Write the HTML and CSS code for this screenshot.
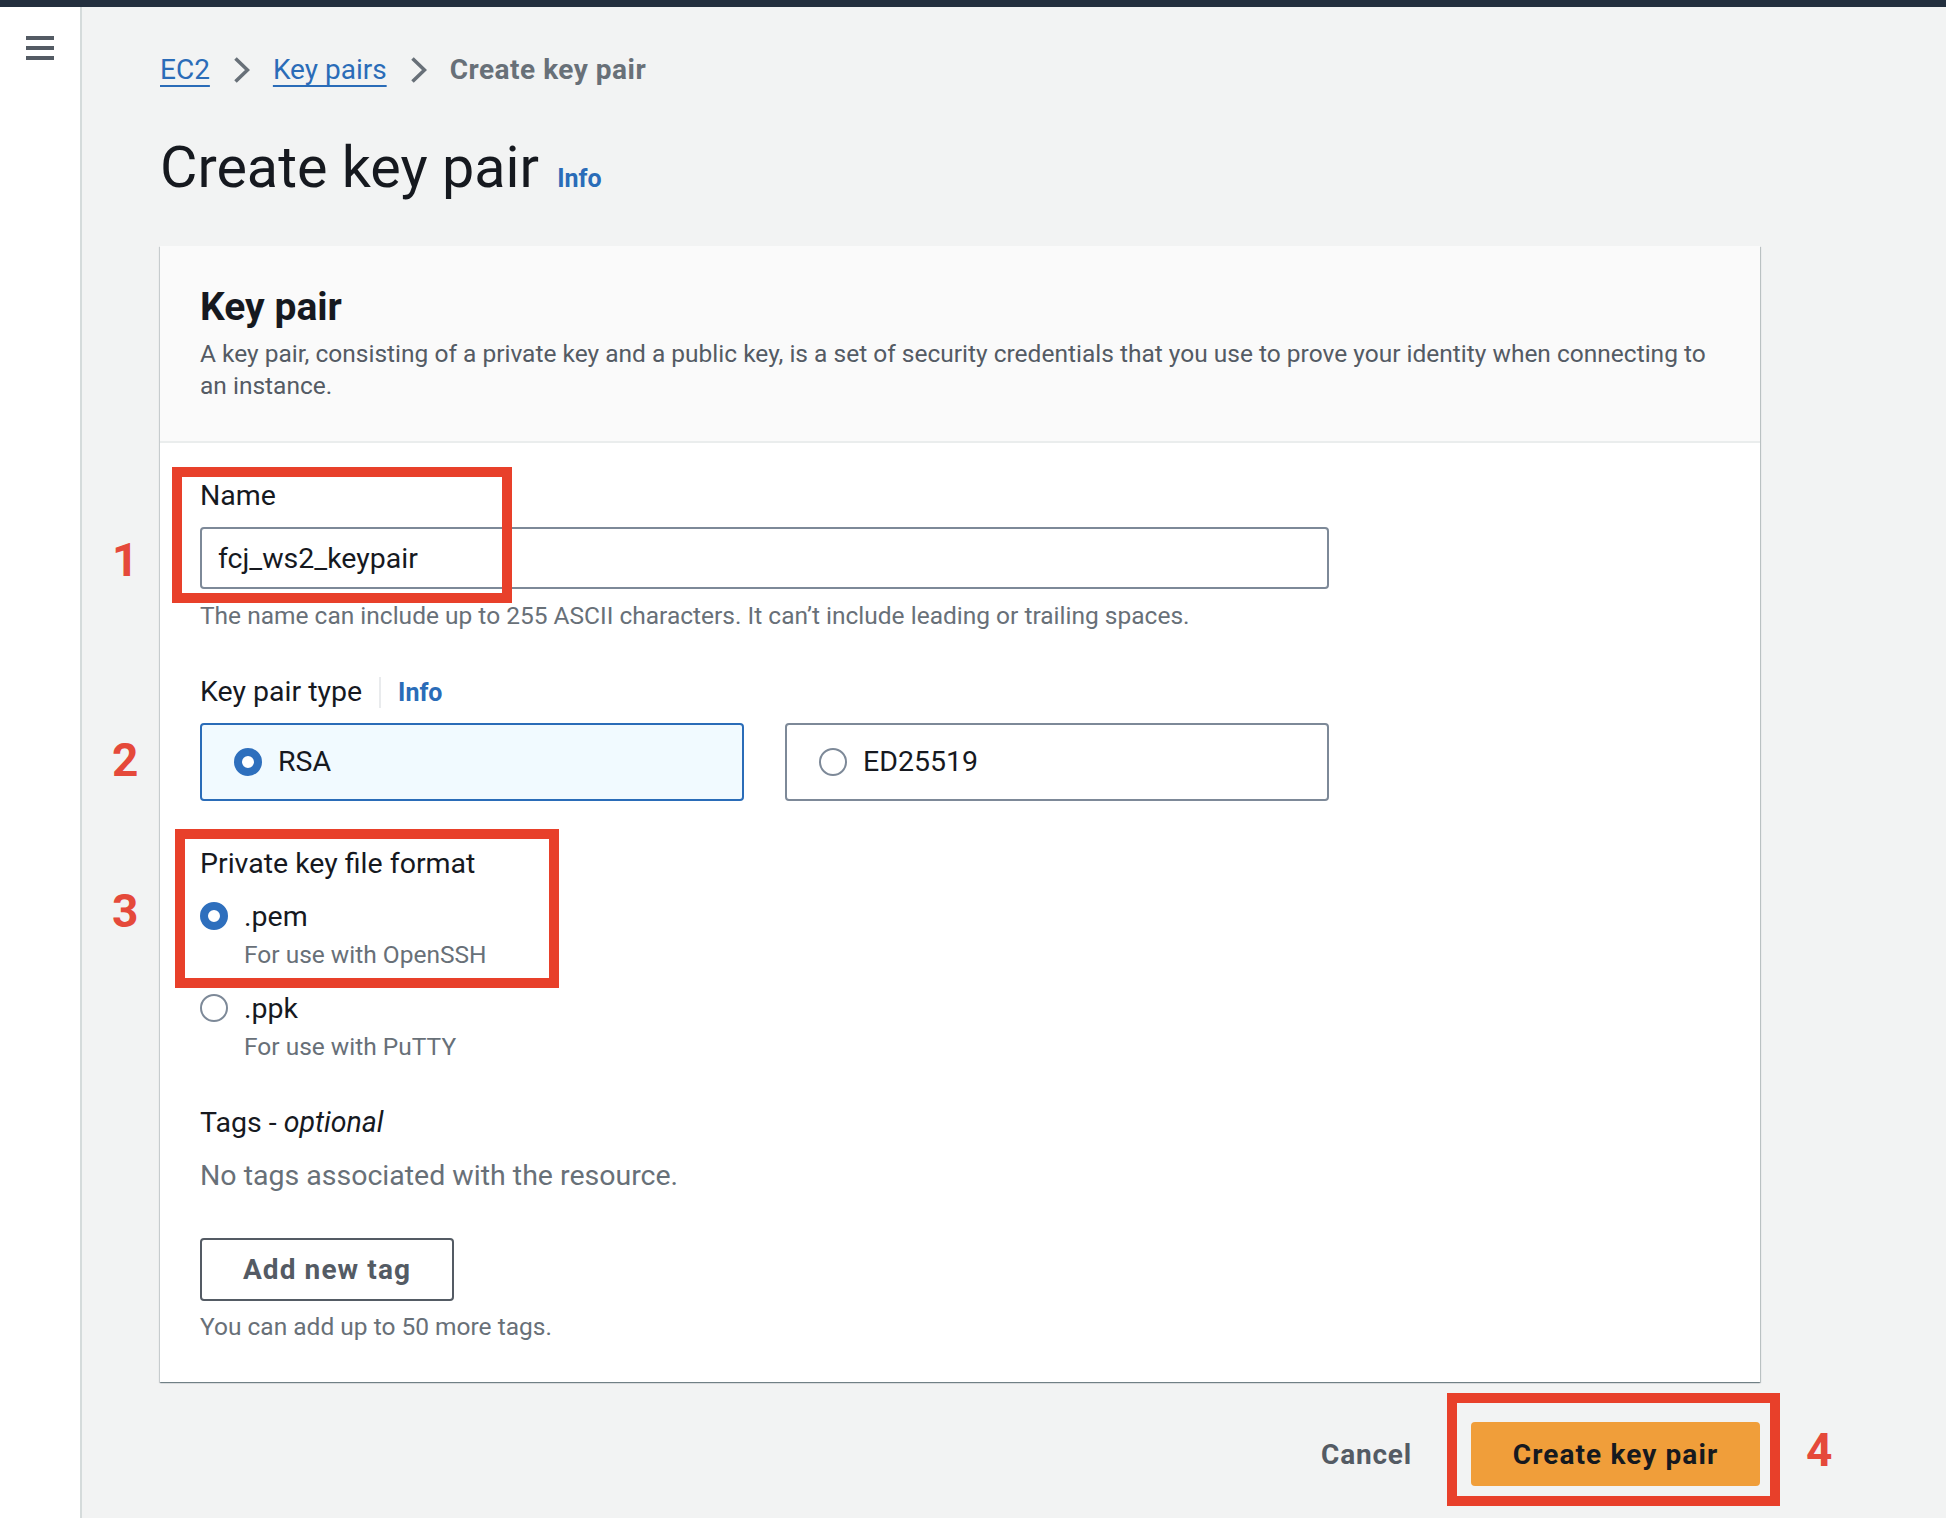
FILE: index.html
```html
<!DOCTYPE html>
<html lang="en">
<head>
<meta charset="utf-8">
<title>Create key pair</title>
<link rel="stylesheet" href="styles.css">
</head>
<body>
<div class="topbar"></div>
<div class="layout">
  <aside class="sidebar">
    <button class="hamburger" aria-label="Open navigation"><span></span><span></span><span></span></button>
  </aside>
  <main class="main">
    <nav class="breadcrumb">
      <a class="crumb-link" href="#">EC2</a>
      <svg class="chevron" width="17" height="28" viewBox="0 0 17 28"><polyline points="2.5,2.5 14.5,14 2.5,25.5" fill="none" stroke="#687078" stroke-width="3.6"/></svg>
      <a class="crumb-link" href="#">Key pairs</a>
      <svg class="chevron" width="17" height="28" viewBox="0 0 17 28"><polyline points="2.5,2.5 14.5,14 2.5,25.5" fill="none" stroke="#687078" stroke-width="3.6"/></svg>
      <span class="crumb-current">Create key pair</span>
    </nav>

    <h1 class="page-title">Create key pair <a class="info-link title-info" href="#">Info</a></h1>

    <section class="card">
      <header class="card-header">
        <h2 class="card-title">Key pair</h2>
        <p class="card-desc">A key pair, consisting of a private key and a public key, is a set of security credentials that you use to prove your identity when connecting to an instance.</p>
      </header>
      <div class="card-body">
        <div class="field field-name">
          <label class="field-label">Name</label>
          <div class="text-input">fcj_ws2_keypair</div>
          <p class="help">The name can include up to 255 ASCII characters. It can’t include leading or trailing spaces.</p>
          <div class="mark mark-1"></div>
          <span class="step step-1">1</span>
        </div>

        <div class="field field-type">
          <div class="label-row">
            <span class="field-label">Key pair type</span>
            <span class="divider"></span>
            <a class="info-link" href="#">Info</a>
          </div>
          <div class="tiles">
            <div class="tile tile-selected"><span class="radio radio-on"></span><span class="tile-text">RSA</span></div>
            <div class="tile"><span class="radio"></span><span class="tile-text">ED25519</span></div>
          </div>
          <span class="step step-2">2</span>
        </div>

        <div class="field field-format">
          <div class="field-label">Private key file format</div>
          <div class="option option-first">
            <span class="radio radio-on"></span>
            <div class="option-text">
              <div class="option-label">.pem</div>
              <div class="option-desc">For use with OpenSSH</div>
            </div>
          </div>
          <div class="option option-second">
            <span class="radio"></span>
            <div class="option-text">
              <div class="option-label">.ppk</div>
              <div class="option-desc">For use with PuTTY</div>
            </div>
          </div>
          <div class="mark mark-3"></div>
          <span class="step step-3">3</span>
        </div>

        <div class="field field-tags">
          <div class="field-label">Tags - <em>optional</em></div>
          <p class="empty-tags">No tags associated with the resource.</p>
          <button class="btn-normal">Add new tag</button>
          <p class="help help-tags">You can add up to 50 more tags.</p>
        </div>
      </div>
    </section>

    <div class="actions">
      <button class="btn-link">Cancel</button>
      <div class="primary-wrap">
        <button class="btn-primary">Create key pair</button>
        <div class="mark mark-4"></div>
        <span class="step step-4">4</span>
      </div>
    </div>
  </main>
</div>
</body>
</html>
```

FILE: styles.css
```css
* { box-sizing: border-box; }

html, body {
  margin: 0;
  padding: 0;
}

body {
  background: #f2f3f3;
  font-family: "Roboto", "Liberation Sans", sans-serif;
  color: #16191f;
  min-height: 1518px;
}

.topbar {
  height: 7px;
  background: #232f3e;
}

.layout {
  display: flex;
  min-height: 1511px;
}

.sidebar {
  width: 82px;
  flex: 0 0 82px;
  background: #ffffff;
  border-right: 2px solid #d5dbdb;
  padding: 29px 0 0 26px;
}

.hamburger {
  display: flex;
  flex-direction: column;
  gap: 6px;
  width: 28px;
  padding: 0;
  border: 0;
  background: transparent;
}

.hamburger span {
  display: block;
  height: 4px;
  width: 28px;
  background: #545b64;
}

.main {
  flex: 1;
  padding: 45px 186px 0 78px;
}

/* Breadcrumb */
.breadcrumb {
  display: flex;
  align-items: center;
  height: 36px;
  font-size: 28px;
  line-height: 36px;
}

.crumb-link {
  color: #2a6cb8;
  text-decoration: underline;
  text-decoration-thickness: 2px;
  text-underline-offset: 6px;
}

.chevron {
  margin: 0 23px 0 23px;
  flex: 0 0 auto;
}

.crumb-current {
  color: #687078;
  font-weight: 700;
  letter-spacing: 0.5px;
}

/* Title */
.page-title {
  margin: 44px 0 0 0;
  font-size: 57.5px;
  line-height: 72px;
  font-weight: 400;
}

.info-link {
  color: #2a6cb8;
  font-weight: 700;
  font-size: 25px;
  text-decoration: none;
}

.title-info {
  margin-left: 4px;
  line-height: 1;
}

/* Card */
.card {
  margin-top: 42px;
  background: #ffffff;
  box-shadow: 0 1px 1px 0 rgba(0, 28, 36, 0.35), 1px 1px 1px 0 rgba(0, 28, 36, 0.18), -1px 1px 1px 0 rgba(0, 28, 36, 0.12);
}

.card-header {
  background: #fafafa;
  border-bottom: 2px solid #eaeded;
  padding: 37px 40px 39px 40px;
}

.card-title {
  margin: 0;
  font-size: 39px;
  line-height: 48px;
  font-weight: 700;
}

.card-desc {
  margin: 7px 0 0 0;
  font-size: 24.5px;
  line-height: 32px;
  color: #545b64;
}

.card-body {
  padding: 35px 40px 39px 40px;
}

.field {
  position: relative;
}

.field-label {
  display: block;
  font-size: 28.5px;
  line-height: 36px;
  color: #16191f;
}

.field-label em {
  font-style: italic;
}

.text-input {
  margin-top: 13px;
  max-width: 1129px;
  height: 62px;
  border: 2px solid #7d8998;
  border-radius: 4px;
  background: #ffffff;
  padding: 0 16px;
  display: flex;
  align-items: center;
  font-size: 28.5px;
  color: #16191f;
}

.help {
  margin: 11px 0 0 0;
  font-size: 24.5px;
  line-height: 32px;
  color: #687078;
}

.field-type {
  margin-top: 42px;
}

.label-row {
  display: flex;
  align-items: center;
  height: 36px;
}

.divider {
  width: 2px;
  height: 31px;
  background: #e9ebed;
  margin: 0 17px 0 17px;
}

.tiles {
  margin-top: 13px;
  max-width: 1129px;
  display: grid;
  grid-template-columns: 1fr 1fr;
  gap: 41px;
}

.tile {
  height: 78px;
  border: 2px solid #7d8998;
  border-radius: 4px;
  background: #ffffff;
  display: flex;
  align-items: center;
  padding-left: 32px;
  gap: 16px;
}

.tile-selected {
  border-color: #2a6cb8;
  background: #f1faff;
}

.tile-text {
  font-size: 28.5px;
  line-height: 36px;
}

.radio {
  display: inline-block;
  width: 28px;
  height: 28px;
  border-radius: 50%;
  border: 2px solid #7d8998;
  background: #ffffff;
  flex: 0 0 28px;
  position: relative;
}

.radio-on {
  border: 8px solid #2e6fbd;
  background: #ffffff;
}

.field-format {
  margin-top: 45px;
}

.option {
  display: flex;
  align-items: flex-start;
  gap: 16px;
}

.option .radio {
  margin-top: 3px;
}

.option-first {
  margin-top: 17px;
}

.option-second {
  margin-top: 20px;
}

.option-label {
  font-size: 28.5px;
  line-height: 36px;
}

.option-desc {
  margin-top: 4px;
  font-size: 24.5px;
  line-height: 32px;
  color: #687078;
}

.field-tags {
  margin-top: 42px;
}

.empty-tags {
  margin: 17px 0 0 0;
  font-size: 28.5px;
  line-height: 36px;
  color: #687078;
}

.btn-normal {
  margin-top: 44px;
  height: 63px;
  width: 254px;
  border: 2px solid #545b64;
  border-radius: 4px;
  background: #ffffff;
  font-family: inherit;
  font-size: 28px;
  font-weight: 700;
  letter-spacing: 1.1px;
  color: #545b64;
  padding: 0;
}

.help-tags {
  margin-top: 10px;
}

/* Footer actions */
.actions {
  margin-top: 40px;
  display: flex;
  justify-content: flex-end;
  align-items: center;
  gap: 59px;
}

.btn-link {
  border: 0;
  background: transparent;
  padding: 0;
  font-family: inherit;
  font-size: 28px;
  font-weight: 700;
  letter-spacing: 0.8px;
  color: #545b64;
}

.primary-wrap {
  position: relative;
}

.btn-primary {
  display: block;
  height: 64px;
  width: 289px;
  border: 0;
  border-radius: 4px;
  background: #f09e3a;
  font-family: inherit;
  font-size: 28px;
  font-weight: 700;
  letter-spacing: 1.1px;
  color: #16191f;
  padding: 0;
}

/* Annotations (overlays) */
.mark {
  position: absolute;
  border: 10px solid #e8402a;
  pointer-events: none;
}

.mark-1 {
  left: -28px;
  top: -11px;
  width: 340px;
  height: 136px;
}

.mark-3 {
  left: -25px;
  top: -17px;
  width: 384px;
  height: 159px;
}

.mark-4 {
  left: -24px;
  top: -29px;
  width: 333px;
  height: 113px;
}

.step {
  position: absolute;
  font-size: 46px;
  line-height: 46px;
  font-weight: 700;
  color: #e5493a;
}

.step-1 { left: -88px; top: 59px; }
.step-2 { left: -88px; top: 63px; }
.step-3 { left: -88px; top: 42px; }
.step-4 { left: 335px; top: 5px; }
```
